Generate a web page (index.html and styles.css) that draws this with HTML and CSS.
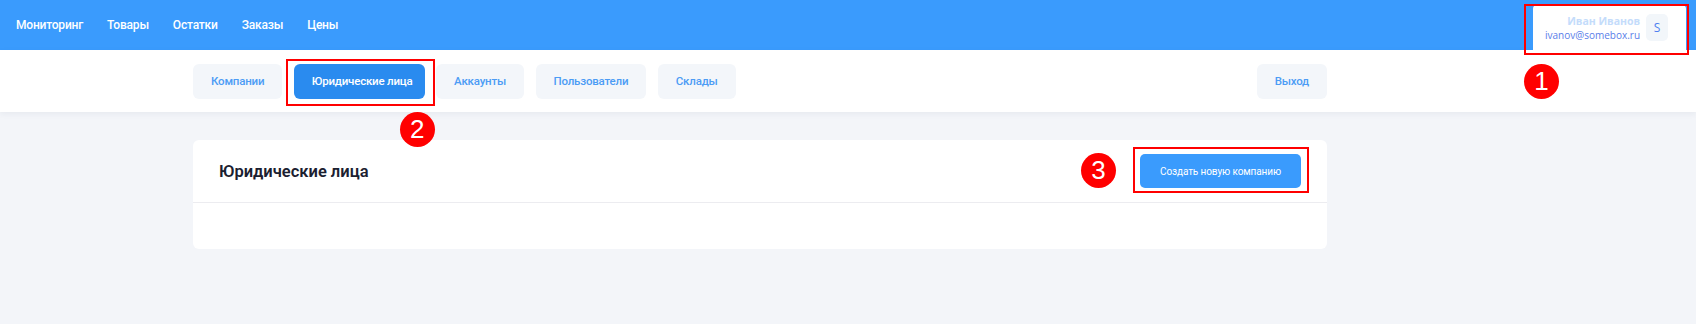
FILE: index.html
```html
<!DOCTYPE html>
<html lang="ru">

<head>
    <meta charset="UTF-8">
    <meta name="viewport" content="width=device-width, initial-scale=1.0">
    <title>Юридические лица</title>
    <link rel="stylesheet" href="styles.css">
</head>

<body>
    <!-- Верхнее меню -->
    <header class="topbar">
        <nav class="main-nav">
            <a href="#">Мониторинг</a>
            <a href="#">Товары</a>
            <a href="#">Остатки</a>
            <a href="#">Заказы</a>
            <a href="#">Цены</a>
        </nav>
        <div class="user">
            <div class="user-info">
                <span class="user-name">Иван Иванов</span>
                <span class="user-mail">ivanov@somebox.ru</span>
            </div>
            <div class="avatar">S</div>
            <span class="mark-box mark-user"></span>
            <span class="mark-num num-1">1</span>
        </div>
    </header>

    <!-- Вкладки настроек -->
    <div class="subbar">
        <div class="container tabs-row">
            <div class="tabs">
                <a class="tab" href="#">Компании</a>
                <a class="tab active" href="#">Юридические лица
                    <span class="mark-box mark-tab"></span>
                    <span class="mark-num num-2">2</span>
                </a>
                <a class="tab" href="#">Аккаунты</a>
                <a class="tab" href="#">Пользователи</a>
                <a class="tab" href="#">Склады</a>
            </div>
            <a class="tab" href="#">Выход</a>
        </div>
    </div>

    <main class="container">
        <section class="card">
            <div class="card-head">
                <h2>Юридические лица</h2>
                <button class="btn">Создать новую компанию
                    <span class="mark-box mark-btn"></span>
                    <span class="mark-num num-3">3</span>
                </button>
            </div>
            <div class="card-body"></div>
        </section>
    </main>
</body>

</html>
```

FILE: styles.css
```css
* {
    padding: 0;
    margin: 0;
    box-sizing: border-box;
}

body {
    background: #f3f5f9;
    font-family: "Roboto", "Liberation Sans", sans-serif;
    width: 100vw;
    height: 100vh;
    overflow: hidden;
}

a {
    text-decoration: none;
}

/* Верхнее меню */
.topbar {
    display: flex;
    justify-content: space-between;
    align-items: flex-end;
    height: 50px;
    background-color: #3a9bfd;
    padding: 0 10px 0 16px;
}

.main-nav {
    display: flex;
    gap: 24px;
    align-self: center;
}

.main-nav a {
    color: #fff;
    font-size: 12px;
    font-weight: 500;
    letter-spacing: -0.2px;
}

/* Блок пользователя */
.user {
    position: relative;
    display: flex;
    align-items: center;
    gap: 6px;
    width: 153px;
    height: 45px;
    padding: 0 18px 0 12px;
    background: #fff;
    border-radius: 4px 4px 0 0;
    font-family: "Open Sans", sans-serif;
}

.user-info {
    display: flex;
    flex-direction: column;
    align-items: flex-end;
    flex: 1;
    line-height: 14px;
}

.user-name {
    color: #c4dcfb;
    font-size: 10.5px;
    font-weight: 700;
}

.user-mail {
    color: #5a7ee9;
    font-size: 10px;
}

.avatar {
    width: 26px;
    height: 27px;
    border-radius: 5px;
    background: #f2f6fa;
    color: #4d7ff0;
    font-size: 12px;
    font-weight: 500;
    display: flex;
    align-items: center;
    justify-content: center;
}

/* Вкладки */
.subbar {
    height: 62px;
    background: #fff;
    box-shadow: 0 2px 6px rgba(30, 50, 90, 0.06);
    padding-top: 14px;
}

.container {
    width: 1134px;
    margin-left: 193px;
}

.tabs-row {
    display: flex;
    justify-content: space-between;
}

.tabs {
    display: flex;
    gap: 11.5px;
}

.tab {
    position: relative;
    display: block;
    height: 35px;
    line-height: 35px;
    padding: 0 18px;
    border-radius: 6px;
    background: #f3f6fa;
    color: #4c9cf5;
    font-size: 11.5px;
    font-weight: 500;
    letter-spacing: -0.2px;
}

.tab.active {
    padding-right: 12px;
    background: #2a8bef;
    color: #fff;
}

/* Карточка */
main {
    padding-top: 28px;
}

.card {
    background: #fff;
    border-radius: 6px;
}

.card-head {
    display: flex;
    justify-content: space-between;
    align-items: center;
    height: 63px;
    padding: 0 26px;
    border-bottom: 1px solid #ececf0;
}

.card-head h2 {
    font-size: 16.5px;
    font-weight: 600;
    color: #1b2030;
}

.btn {
    position: relative;
    width: 161px;
    height: 34px;
    border: none;
    border-radius: 5px;
    background: #3a9bfd;
    color: #fff;
    font-family: inherit;
    font-size: 10px;
    letter-spacing: -0.1px;
}

.card-body {
    height: 46px;
}

/* Пометки на скриншоте */
.mark-box {
    position: absolute;
    border: 2px solid #ff0000;
    pointer-events: none;
}

.mark-user {
    top: -1px;
    left: -9px;
    right: -3px;
    bottom: -5px;
}

.mark-tab {
    top: -5px;
    left: -8px;
    right: -10px;
    bottom: -7px;
}

.mark-btn {
    top: -7px;
    left: -7px;
    right: -8px;
    bottom: -5px;
}

.mark-num {
    position: absolute;
    width: 35px;
    height: 35px;
    border-radius: 50%;
    background: #ff0000;
    color: #fff;
    font-family: "Liberation Sans", sans-serif;
    font-size: 26px;
    font-weight: 400;
    line-height: 35px;
    letter-spacing: 0;
    text-align: center;
}

.num-1 {
    left: -9px;
    top: 59px;
}

.num-2 {
    left: 106px;
    top: 48px;
}

.num-3 {
    left: -59px;
    top: -1px;
}
```
